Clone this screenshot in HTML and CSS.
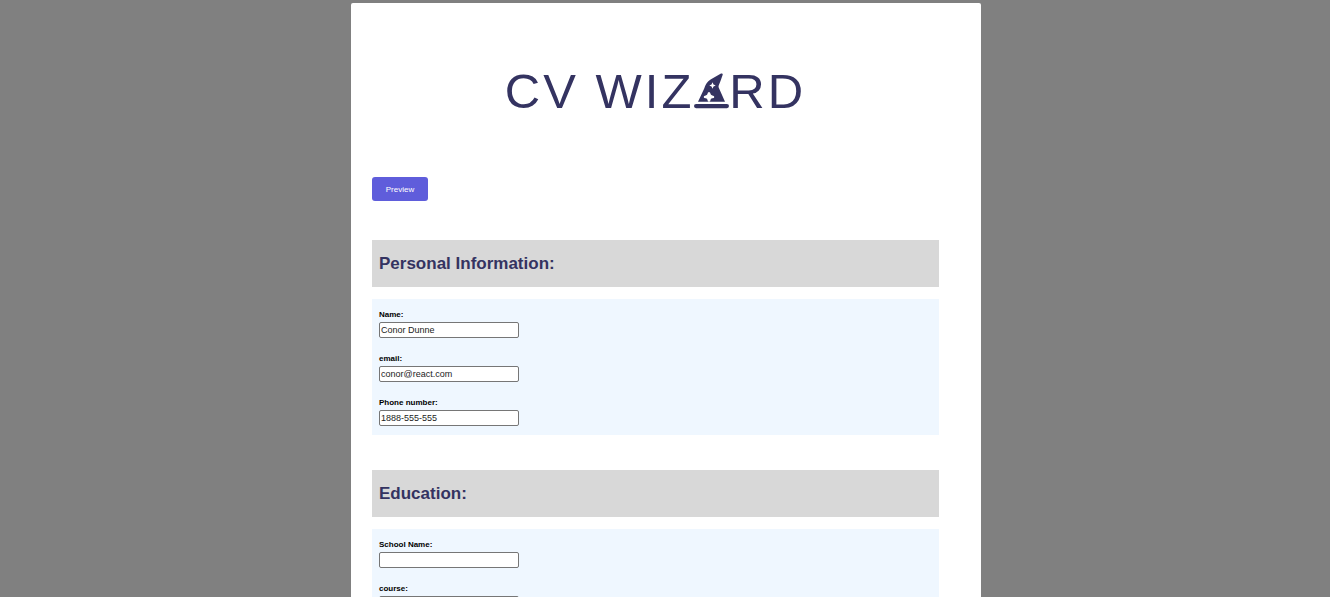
FILE: index.html
```html
<!DOCTYPE html>
<html lang="en">
<head>
<meta charset="utf-8">
<meta name="viewport" content="width=device-width, initial-scale=1">
<title>CV Wizard</title>
<link rel="stylesheet" href="styles.css">
</head>
<body>
<main class="page">
  <h1 class="logo">
    <span>CV WIZ</span>
    <svg class="hat" viewBox="0 0 35 36" role="img" aria-label="A">
      <path class="ink" d="M27 .6c1-.6 2 .2 1.700 1.200L26.500 8 24.700 12.500c-.3.8-.2 1.500.1 2.200L31 28.700H4L10 16c.7-1.700 1.300-4 2.300-5.300C13.500 9 15 7.500 17 6.200z"/>
      <rect class="ink" x="0" y="31" width="35" height="4.200" rx="2.100"/>
      <path class="star" d="M18.500 9.300l1 2.200 2.200 1-2.200 1-1 2.200-1-2.200-2.200-1 2.200-1z"/>
      <path class="star" d="M15 19q1.300 0 1.400 1.600.2 1.700 1.900 1.900 2 .1 2 1.400t-2 1.400q-1.700.2-1.900 1.900 0 1.500-1.400 1.500t-1.400-1.500q-.2-1.700-1.900-1.900-2-.1-2-1.400t2-1.400q1.700-.2 1.900-1.900.1-1.600 1.400-1.600z"/>
    </svg>
    <span>RD</span>
  </h1>

  <button class="preview" type="button">Preview</button>

  <form class="sections">
    <section>
      <h2 class="section-title">Personal Information:</h2>
      <div class="fields">
        <div class="field">
          <label for="name">Name:</label>
          <input id="name" type="text" value="Conor Dunne">
        </div>
        <div class="field">
          <label for="email">email:</label>
          <input id="email" type="text" value="conor@react.com">
        </div>
        <div class="field">
          <label for="phone">Phone number:</label>
          <input id="phone" type="text" value="1888-555-555">
        </div>
      </div>
    </section>
    <section>
      <h2 class="section-title">Education:</h2>
      <div class="fields">
        <div class="field">
          <label for="school">School Name:</label>
          <input id="school" type="text">
        </div>
        <div class="field">
          <label for="course">course:</label>
          <input id="course" type="text">
        </div>
      </div>
    </section>
  </form>
</main>
</body>
</html>
```
FILE: styles.css
```css
* {
  box-sizing: border-box;
}

html {
  background: #808080;
  scrollbar-width: none;
}

body {
  margin: 0;
  padding: 3px 0 3px 2px;
  font-family: "Liberation Sans", Arial, sans-serif;
  font-size: 8px;
  color: #000;
}

.page {
  max-width: 630px;
  margin: 0 auto;
  padding: 60px 42px 42px 21px;
  background: #fff;
  border-radius: 2px;
}

.logo {
  display: flex;
  justify-content: center;
  align-items: center;
  margin: 0 0 58px;
  font-size: 49px;
  font-weight: 400;
  line-height: 56px;
  letter-spacing: 3px;
  white-space: nowrap;
  color: #343361;
}

.hat {
  width: 35px;
  height: 36px;
}

.ink {
  fill: #343361;
}

.star {
  fill: #fff;
}

.preview {
  display: block;
  width: 56px;
  height: 24px;
  padding: 0;
  border: 0;
  border-radius: 3px;
  background: #5f5ddb;
  color: #fff;
  font: inherit;
}

.sections {
  display: grid;
  gap: 35px;
  margin-top: 39px;
}

.section-title {
  margin: 0 0 12px;
  padding: 14px 7px;
  background: #d8d8d8;
  color: #343361;
  font-size: 17px;
  line-height: 19px;
}

.fields {
  display: grid;
  gap: 15px;
  padding: 10px 7px 9px;
  background: #eff7ff;
}

.field {
  display: grid;
  justify-items: start;
  gap: 1px;
}

.field label {
  font-weight: 700;
  line-height: 12px;
}

.field input {
  width: 140px;
  height: 16px;
  padding: 0 1px;
  border: 1px solid #767676;
  border-radius: 2px;
  background: #fff;
  color: #222;
  font-family: inherit;
  font-size: 9px;
}
```
